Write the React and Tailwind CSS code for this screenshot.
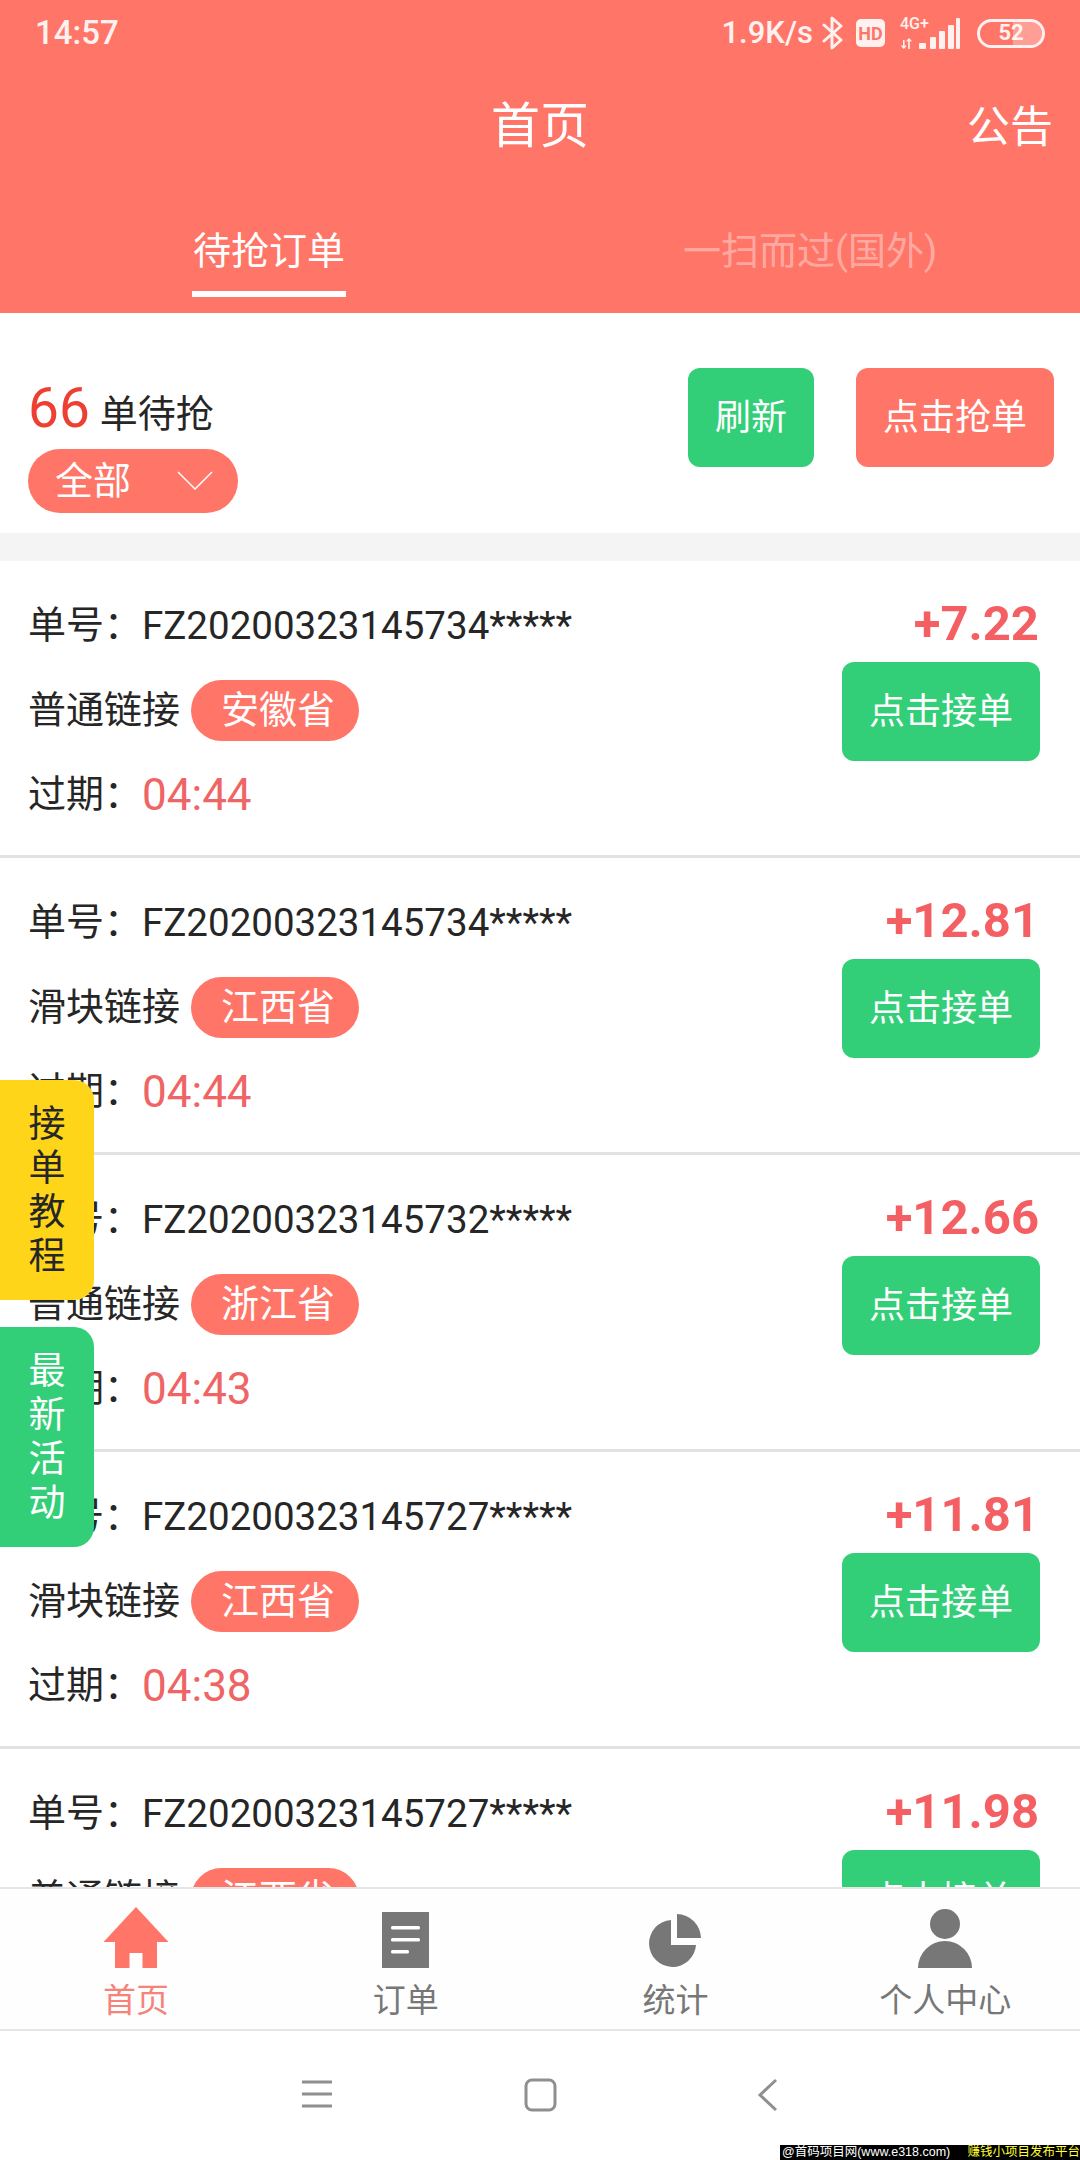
import React from "react";

const orders = [
  { no: "FZ20200323145734*****", amt: "+7.22", type: "普通链接", prov: "安徽省", exp: "04:44" },
  { no: "FZ20200323145734*****", amt: "+12.81", type: "滑块链接", prov: "江西省", exp: "04:44" },
  { no: "FZ20200323145732*****", amt: "+12.66", type: "普通链接", prov: "浙江省", exp: "04:43" },
  { no: "FZ20200323145727*****", amt: "+11.81", type: "滑块链接", prov: "江西省", exp: "04:38" },
  { no: "FZ20200323145727*****", amt: "+11.98", type: "普通链接", prov: "江西省", exp: "04:38" },
];

function Order({ o }) {
  return (
    <div className="flex justify-between h-[297px] shrink-0 border-b-[3px] border-[#e2e2e2] bg-white pl-[28px] pr-[40px] pt-[22.5px]">
      <div className="text-[38px] text-[#262626]">
        <div className="h-[84px] flex items-center">
          <span>单号：</span>
          <span className="text-[38.5px]">{o.no}</span>
        </div>
        <div className="h-[85px] flex items-center">
          <span>{o.type}</span>
          <span className="ml-[11px] w-[168px] h-[61px] pl-[6px] rounded-full bg-[#ff7568] text-white flex items-center justify-center text-[38px]">{o.prov}</span>
        </div>
        <div className="h-[84px] flex items-center">
          <span>过期：</span>
          <span className="text-[#ef6464] text-[44px]">{o.exp}</span>
        </div>
      </div>
      <div className="flex flex-col items-end">
        <div className="h-[84px] flex items-center font-bold text-[49px] text-[#f45f63] pr-[1px] -mt-[2px]">{o.amt}</div>
        <button className="mt-[-3.5px] w-[198px] h-[99px] rounded-[12px] bg-[#33cf78] text-white text-[36px]">点击接单</button>
      </div>
    </div>
  );
}

function Home() {
  return (
    <svg width="66" height="61" viewBox="0 0 66 61" className="block">
      <path fill="#ff7568" d="M33 0 L65.5 35 L54 35 L54 61 L39.5 61 L39.5 46 L26.5 46 L26.5 61 L12 61 L12 35 L.5 35 Z" />
    </svg>
  );
}
function Doc() {
  return (
    <svg width="48" height="56" viewBox="0 0 48 56" className="block">
      <rect width="47" height="56" fill="#777" />
      <rect x="9" y="14" width="29" height="3.5" rx="1.5" fill="#fff" />
      <rect x="9" y="26" width="29" height="3.5" rx="1.5" fill="#fff" />
      <rect x="9" y="38" width="18" height="3.5" rx="1.5" fill="#fff" />
    </svg>
  );
}
function Pie() {
  return (
    <svg width="54" height="54" viewBox="0 0 54 54" className="block">
      <path fill="#777" d="M23 5 L23 30 L48 30 A23.5 23.5 0 1 1 23 5 Z" transform="translate(0 1)" />
      <path fill="#777" d="M29 0 A24.5 24.5 0 0 1 53 24 L29 24 Z" />
    </svg>
  );
}
function Person() {
  return (
    <svg width="54" height="59" viewBox="0 0 54 59" className="block">
      <circle cx="27" cy="15" r="15" fill="#777" />
      <path fill="#777" d="M0 59 A27 27 0 0 1 54 59 Z" />
    </svg>
  );
}

function NavItem({ icon, label, active }) {
  return (
    <div className="flex flex-col items-center">
      <div className="h-[64px] flex items-end justify-center">{icon}</div>
      <div className={"text-[33px] leading-[40px] mt-[13px] " + (active ? "text-[#f5837a]" : "text-[#777]")}>{label}</div>
    </div>
  );
}

export default function App() {
  return (
    <div
      className="relative w-[1080px] h-[2160px] overflow-hidden bg-white flex flex-col"
      style={{ fontFamily: 'Roboto, "Noto Sans CJK SC", sans-serif' }}
    >
      <header className="h-[313px] shrink-0 bg-[#ff7568] text-white">
        <div className="h-[66px] flex items-center justify-between pl-[35px] pr-[35px] text-white/90">
          <span className="text-[33px] font-medium">14:57</span>
          <div className="flex items-center">
            <span className="text-[31px] font-medium">1.9K/s</span>
            <svg width="24" height="34" viewBox="0 0 24 34" className="ml-[8px]" fill="none" stroke="currentColor" strokeWidth="3" strokeLinejoin="round" strokeLinecap="round">
              <path d="M3 9 L20 24 L11 32 L11 2 L20 10 L3 25" />
            </svg>
            <span className="ml-[11px] w-[29px] h-[28px] rounded-[5px] bg-white/90 text-[#ff7568] text-[18px] font-bold flex items-center justify-center">HD</span>
            <div className="ml-[15px] w-[60px] h-[34px] flex flex-col items-start justify-between relative">
              <span className="text-[16px] leading-[16px] font-medium">4G+</span>
              <svg width="60" height="32" viewBox="0 0 60 32" className="absolute left-0 top-[2px]" fill="currentColor">
                <path d="M3 22 h1.6 v6 l1.6 -1 v1.6 l-2.4 2.4 l-2.4 -2.4 v-1.6 l1.6 1z" />
                <path d="M9 20 l2.4 2.4 v1.6 l-1.6 -1 v8 h-1.6 v-8 l-1.6 1 v-1.6z" />
                <rect x="19" y="25" width="7" height="6" rx="1" />
                <rect x="30" y="19" width="6" height="12" rx="1" />
                <rect x="39" y="13" width="6" height="18" rx="1" />
                <rect x="48" y="7" width="6" height="24" rx="1" />
                <rect x="56" y="0" width="4" height="31" rx="1" />
              </svg>
            </div>
            <div className="ml-[17px] relative w-[68px] h-[29px] rounded-full border-[3px] border-white/90 overflow-hidden flex items-center justify-center">
              <div className="absolute right-0 top-0 bottom-0 w-[29px] bg-white/30"></div>
              <span className="relative text-[22px] font-bold leading-none">52</span>
            </div>
          </div>
        </div>
        <div className="h-[118px] grid grid-cols-3 items-center pt-[4px]">
          <div></div>
          <div className="text-center text-[49px]">首页</div>
          <div className="text-right text-[43px] pr-[27px]">公告</div>
        </div>
        <div className="h-[129px] grid grid-cols-2 text-[38px]">
          <div className="flex justify-center pr-[2px]">
            <div className="w-[154px] h-[113px] border-b-[6px] border-white pt-[41px] text-center leading-[52px] whitespace-nowrap">待抢订单</div>
          </div>
          <div className="pt-[41px] leading-[52px] text-center text-white/40">一扫而过(国外)</div>
        </div>
      </header>

      <section className="h-[220px] shrink-0 bg-white flex justify-between pl-[28px] pr-[26px] text-[#262626]">
        <div className="pt-[54px]">
          <div className="flex items-baseline h-[82px]">
            <span className="text-[55px] text-[#ee3f33]">66</span>
            <span className="ml-[10px] text-[38px]">单待抢</span>
          </div>
          <div className="w-[210px] h-[64px] rounded-full bg-[#ff7568] text-white text-[38px] flex items-center pl-[27px]">
            <span>全部</span>
            <svg width="36" height="20" viewBox="0 0 36 20" className="ml-[46px]" fill="none" stroke="#fff" strokeWidth="1.5">
              <path d="M1 1 L18 18 L35 1" />
            </svg>
          </div>
        </div>
        <div className="flex pt-[55px] gap-[42px] text-white text-[36px]">
          <button className="w-[126px] h-[99px] rounded-[12px] bg-[#33cf78]">刷新</button>
          <button className="w-[198px] h-[99px] rounded-[12px] bg-[#ff7568]">点击抢单</button>
        </div>
      </section>

      <div className="h-[28px] shrink-0 bg-[#f4f4f4]"></div>

      <main className="flex-1 min-h-0 overflow-hidden flex flex-col">
        {orders.map((o, i) => (
          <Order key={i} o={o} />
        ))}
      </main>

      <nav className="h-[144px] shrink-0 border-t-2 border-b-2 border-[#e6e6e6] bg-[#fefefe] grid grid-cols-4 pt-[15px] pl-[1px]">
        <NavItem icon={<Home />} label="首页" active />
        <NavItem icon={<Doc />} label="订单" />
        <NavItem icon={<Pie />} label="统计" />
        <NavItem icon={<Person />} label="个人中心" />
      </nav>

      <div className="h-[129px] shrink-0 bg-white flex items-start justify-center pt-[47px] pl-[4px]">
        <svg width="480" height="34" viewBox="0 0 480 34" fill="none" stroke="#8f8f8f">
          <path strokeWidth="3" d="M0 4 H30 M0 16 H30 M0 28 H30" />
          <rect x="224" y="2" width="29" height="30" rx="6" strokeWidth="3" />
          <path strokeWidth="3" d="M474 2 L458 17 L474 32" />
        </svg>
      </div>

      <div className="absolute left-0 top-[1080px] w-[94px] h-[220px] rounded-r-[20px] bg-[#ffd51a] text-[#262626] text-[37px] leading-[44px] flex flex-col items-center justify-center pt-[1px]">
        <span>接</span><span>单</span><span>教</span><span>程</span>
      </div>
      <div className="absolute left-0 top-[1327px] w-[94px] h-[220px] rounded-r-[20px] bg-[#33cf78] text-white text-[37px] leading-[44px] flex flex-col items-center justify-center pt-[1px]">
        <span>最</span><span>新</span><span>活</span><span>动</span>
      </div>

      <div className="absolute right-0 bottom-0 w-[300px] h-[15px] bg-black text-[12.5px] leading-[15px] flex items-center pl-[2px] whitespace-nowrap font-['Liberation_Sans','Noto_Sans_CJK_SC',sans-serif]">
        <span className="text-white">@首码项目网(www.e318.com)</span>
        <span className="ml-auto text-[#ffff33]">赚钱小项目发布平台</span>
      </div>
    </div>
  );
}
